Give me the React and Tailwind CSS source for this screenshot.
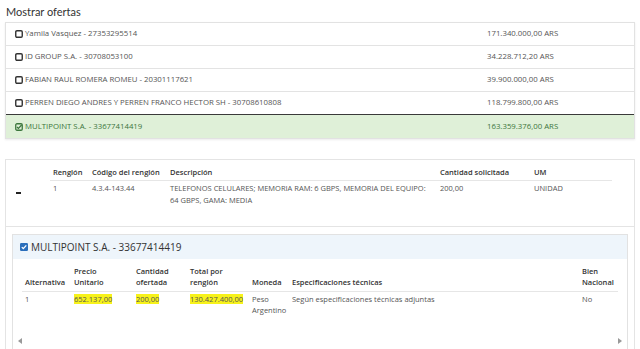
const offers = [
  { name: "Yamila Vasquez - 27353295514", amount: "171.340.000,00 ARS" },
  { name: "ID GROUP S.A. - 30708053100", amount: "34.228.712,20 ARS" },
  { name: "FABIAN RAUL ROMERA ROMEU - 20301117621", amount: "39.900.000,00 ARS" },
  { name: "PERREN DIEGO ANDRES Y PERREN FRANCO HECTOR SH - 30708610808", amount: "118.799.800,00 ARS" },
  { name: "MULTIPOINT S.A. - 33677414419", amount: "163.359.376,00 ARS", selected: true },
];

function BoxIcon({ checked }) {
  if (checked) {
    return (
      <svg width="8" height="8" viewBox="0 0 8 8" className="shrink-0">
        <rect x="0.75" y="0.75" width="6.5" height="6.5" rx="1.2" fill="none" stroke="#3c763d" strokeWidth="1.3" />
        <path d="M2 4 L3.4 5.4 L6.6 2" fill="none" stroke="#3c763d" strokeWidth="1.3" />
      </svg>
    );
  }
  return (
    <svg width="8" height="8" viewBox="0 0 8 8" className="shrink-0">
      <rect x="0.75" y="0.75" width="6.5" height="6.5" rx="1.2" fill="none" stroke="#333" strokeWidth="1.4" />
    </svg>
  );
}

function OfferRow({ offer, last, beforeSelected }) {
  return (
    <div
      className={[
        "h-[23px] flex items-center",
        offer.selected ? "bg-[#dff0d8] text-[#3c763d]" : "text-[#555]",
        last ? "" : beforeSelected ? "border-b border-[#3a3a3a]" : "border-b border-[#e3e3e3]",
      ].join(" ")}
    >
      <div className="w-[472px] pl-[9px] flex items-center gap-[2px]">
        <BoxIcon checked={offer.selected} />
        <span>{offer.name}</span>
      </div>
      <div className="pl-[9px]">{offer.amount}</div>
    </div>
  );
}

const cols1 = "grid grid-cols-[39px_78px_270px_94px_81px]";
const cols2 = "grid grid-cols-[49px_62px_54px_62px_40px_290px_39px]";

export default function App() {
  return (
    <div className="w-[640px] h-[349px] overflow-hidden bg-white font-['Open_Sans',sans-serif]">
      <div className="h-[22px] pl-[6px] pt-[4px] text-[11px] text-[#333] font-['Lato',sans-serif]">Mostrar ofertas</div>

      <div className="mx-[5px] border border-[#e2e2e2] shadow-[0_1px_2px_rgba(0,0,0,0.08)] text-[7.8px]">
        {offers.map((o, i) => (
          <OfferRow
            key={o.name}
            offer={o}
            last={i === offers.length - 1}
            beforeSelected={offers[i + 1]?.selected}
          />
        ))}
      </div>

      <div className="mt-[20px] mx-[5px] border border-[#e4e4e4] h-[200px] text-[7.5px] text-[#555]">
        <div className="h-[67px] border-b border-[#e4e4e4] flex">
          <div className="w-[44px] flex items-center pl-[10px]">
            <div className="w-[5px] h-[2px] bg-[#222]" />
          </div>
          <div className="pt-[3px]">
            <div className={`${cols1} border-b border-[#e6e6e6] font-semibold text-[#333]`}>
              <div className="pl-[3px] pt-[4px] pb-[2px]">Renglón</div>
              <div className="pl-[3px] pt-[4px] pb-[2px]">Código del renglón</div>
              <div className="pl-[3px] pt-[4px] pb-[2px]">Descripción</div>
              <div className="pl-[3px] pt-[4px] pb-[2px]">Cantidad solicitada</div>
              <div className="pl-[3px] pt-[4px] pb-[2px]">UM</div>
            </div>
            <div className={`${cols1} leading-[12px] pt-[1px]`}>
              <div className="pl-[3px]">1</div>
              <div className="pl-[3px]">4.3.4-143.44</div>
              <div className="pl-[3px] pr-[4px]">
                TELEFONOS CELULARES; MEMORIA RAM: 6 GBPS, MEMORIA DEL EQUIPO: 64 GBPS, GAMA: MEDIA
              </div>
              <div className="pl-[3px]">200,00</div>
              <div className="pl-[3px]">UNIDAD</div>
            </div>
          </div>
        </div>

        <div className="px-[6px] pt-[7px]">
          <div className="border border-[#e2e2e2] h-[130px] flex flex-col">
            <div className="h-[24px] bg-[#eef5fb] flex items-center gap-[3px] pl-[7px] text-[10px] text-[#333]">
              <svg width="8" height="8" viewBox="0 0 8 8">
                <rect x="0" y="0" width="8" height="8" rx="1.2" fill="#2a6ebb" />
                <path d="M1.8 4.1 L3.3 5.6 L6.3 2.4" fill="none" stroke="#fff" strokeWidth="1.3" />
              </svg>
              <span>MULTIPOINT S.A. - 33677414419</span>
            </div>
            <div className="px-[9px] pt-[7px]">
              <div className={`${cols2} items-end border-b border-[#e6e6e6] font-semibold text-[#333] leading-[11px] pb-[3px]`}>
                <div className="pl-[3px]">Alternativa</div>
                <div className="pl-[3px]">Precio<br />Unitario</div>
                <div className="pl-[3px]">Cantidad<br />ofertada</div>
                <div className="pl-[3px]">Total por<br />renglón</div>
                <div className="pl-[3px]">Moneda</div>
                <div className="pl-[3px]">Especificaciones técnicas</div>
                <div className="pl-[3px]">Bien<br />Nacional</div>
              </div>
              <div className={`${cols2} leading-[11px] pt-[2px]`}>
                <div className="pl-[3px]">1</div>
                <div className="pl-[3px]"><span className="bg-[#f7f21a]">652.137,00</span></div>
                <div className="pl-[3px]"><span className="bg-[#f7f21a]">200,00</span></div>
                <div className="pl-[3px]"><span className="bg-[#f7f21a]">130.427.400,00</span></div>
                <div className="pl-[3px]">Peso<br />Argentino</div>
                <div className="pl-[3px]">Según especificaciones técnicas adjuntas</div>
                <div className="pl-[3px]">No</div>
              </div>
            </div>
            <div className="mt-[22px] flex justify-between px-[5px]">
              <svg width="4" height="6" viewBox="0 0 4 6"><path d="M4 0 L0 3 L4 6 Z" fill="#999" /></svg>
              <svg width="4" height="6" viewBox="0 0 4 6"><path d="M0 0 L4 3 L0 6 Z" fill="#999" /></svg>
            </div>
          </div>
        </div>
      </div>
    </div>
  );
}
